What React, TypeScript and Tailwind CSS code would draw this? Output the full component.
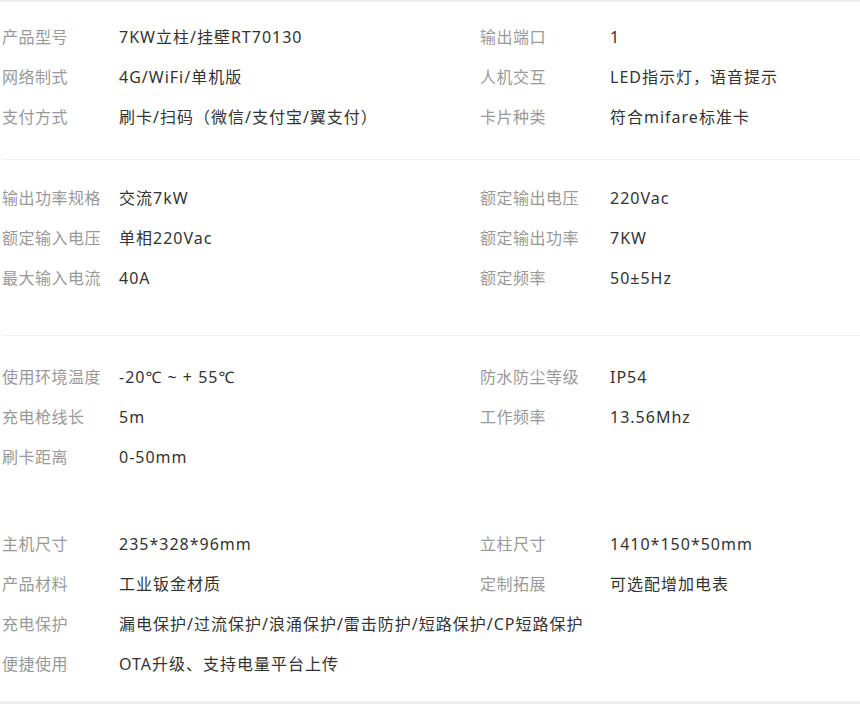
type Spec = { label: string; value: string };
type Row = { left: Spec; right?: Spec };

const sections: { rows: Row[]; cls: string }[] = [
  {
    cls: 'pt-[15px] pb-[22px]',
    rows: [
      { left: { label: '产品型号', value: '7KW立柱/挂壁RT70130' }, right: { label: '输出端口', value: '1' } },
      { left: { label: '网络制式', value: '4G/WiFi/单机版' }, right: { label: '人机交互', value: 'LED指示灯，语音提示' } },
      { left: { label: '支付方式', value: '刷卡/扫码（微信/支付宝/翼支付）' }, right: { label: '卡片种类', value: '符合mifare标准卡' } },
    ],
  },
  {
    cls: 'pt-[18px] pb-[37px]',
    rows: [
      { left: { label: '输出功率规格', value: '交流7kW' }, right: { label: '额定输出电压', value: '220Vac' } },
      { left: { label: '额定输入电压', value: '单相220Vac' }, right: { label: '额定输出功率', value: '7KW' } },
      { left: { label: '最大输入电流', value: '40A' }, right: { label: '额定频率', value: '50±5Hz' } },
    ],
  },
  {
    cls: 'pt-[21px] pb-[47px]',
    rows: [
      { left: { label: '使用环境温度', value: '-20℃ ~ + 55℃' }, right: { label: '防水防尘等级', value: 'IP54' } },
      { left: { label: '充电枪线长', value: '5m' }, right: { label: '工作频率', value: '13.56Mhz' } },
      { left: { label: '刷卡距离', value: '0-50mm' } },
    ],
  },
  {
    cls: 'pt-0 pb-[16px]',
    rows: [
      { left: { label: '主机尺寸', value: '235*328*96mm' }, right: { label: '立柱尺寸', value: '1410*150*50mm' } },
      { left: { label: '产品材料', value: '工业钣金材质' }, right: { label: '定制拓展', value: '可选配增加电表' } },
      { left: { label: '充电保护', value: '漏电保护/过流保护/浪涌保护/雷击防护/短路保护/CP短路保护' } },
      { left: { label: '便捷使用', value: 'OTA升级、支持电量平台上传' } },
    ],
  },
];

function SpecRow({ row }: { row: Row }) {
  return (
    <div className="flex h-10 items-center text-[16px]">
      <div className={row.right ? 'flex w-[478px] shrink-0' : 'flex flex-1'}>
        <span className="w-[117px] shrink-0 tracking-[0.5px] text-[#999]">{row.left.label}</span>
        <span className="whitespace-nowrap tracking-[1px] text-[#333]">{row.left.value}</span>
      </div>
      {row.right && (
        <div className="flex">
          <span className="w-[130px] shrink-0 tracking-[0.5px] text-[#999]">{row.right.label}</span>
          <span className="whitespace-nowrap tracking-[1px] text-[#333]">{row.right.value}</span>
        </div>
      )}
    </div>
  );
}

export default function App() {
  return (
    <div
      className="w-[860px] h-[704px] bg-white overflow-hidden flex flex-col"
      style={{ fontFamily: '"Noto Sans", "Noto Sans CJK SC", sans-serif' }}
    >
      <div className="h-[2px] bg-[#eeeeee]" />
      <div className="flex-1 pl-[2px]">
        {sections.map((s, i) => (
          <div key={i} className={i < 2 ? 'border-b border-[#f0f0f0]' : ''}>
            <div className={s.cls}>
              {s.rows.map((r, j) => (
                <SpecRow key={j} row={r} />
              ))}
            </div>
          </div>
        ))}
      </div>
      <div className="h-[3px] bg-[#eeeeee]" />
    </div>
  );
}
